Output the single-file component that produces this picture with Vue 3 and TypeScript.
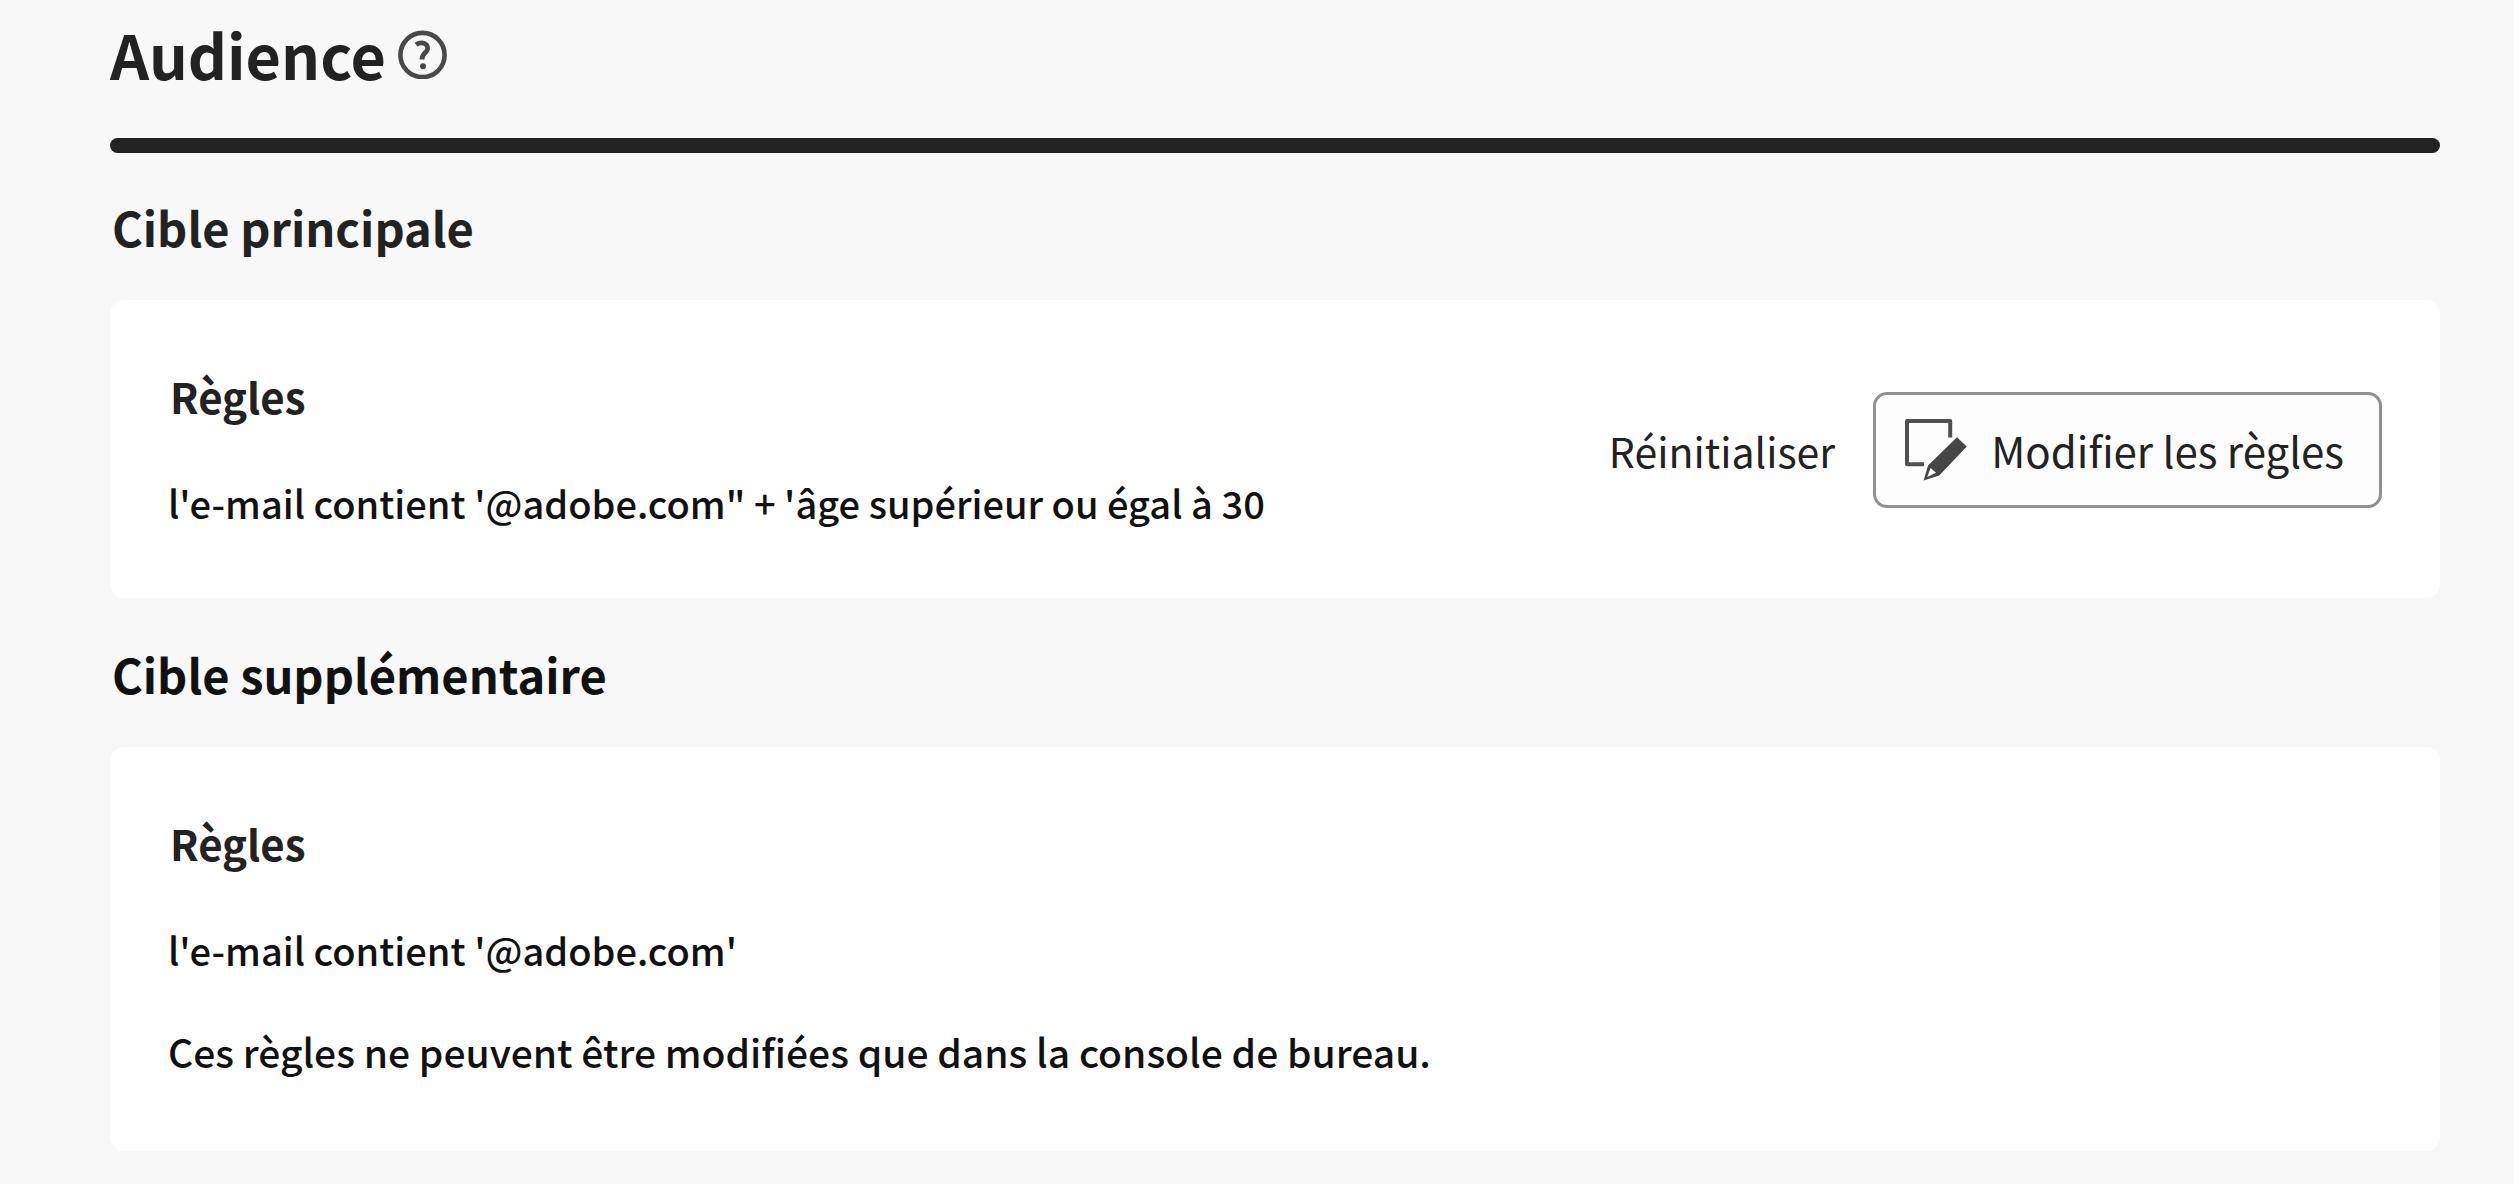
<script setup lang="ts">
interface Target {
  id: string
  title: string
  rule: string
  note?: string
  editable: boolean
}

const targets: Target[] = [
  {
    id: 'main',
    title: 'Cible principale',
    rule: `l'e-mail contient '@adobe.com" + 'âge supérieur ou égal à 30`,
    editable: true,
  },
  {
    id: 'extra',
    title: 'Cible supplémentaire',
    rule: `l'e-mail contient '@adobe.com'`,
    note: 'Ces règles ne peuvent être modifiées que dans la console de bureau.',
    editable: false,
  },
]
</script>

<template>
  <main class="page">
    <header class="header">
      <h1 class="title">Audience</h1>
      <button class="help" type="button" aria-label="Aide">
        <svg viewBox="0 0 49 49" width="49" height="49" fill="none" stroke="#494949" aria-hidden="true">
          <circle cx="24.5" cy="25" r="22.1" stroke-width="4.6" />
          <path d="M18 14.6C20.6 12.8 24 12.4 26.8 13.6C29.6 14.9 30.4 18 28.9 20.6C27.4 23.2 24 24.2 24 29.4" stroke-width="4.8" />
          <circle cx="25" cy="36.2" r="3" fill="#494949" stroke="none" />
        </svg>
      </button>
    </header>
    <hr class="bar" />

    <section v-for="t in targets" :key="t.id" class="target" :class="t.id" :aria-labelledby="t.id">
      <h2 :id="t.id" class="subtitle">{{ t.title }}</h2>
      <div class="card">
        <div class="rules">
          <h3 class="label">Règles</h3>
          <p class="rule">{{ t.rule }}</p>
          <p v-if="t.note" class="note">{{ t.note }}</p>
        </div>
        <div v-if="t.editable" class="actions">
          <button class="reset" type="button">Réinitialiser</button>
          <button class="edit" type="button">
            <svg viewBox="0 0 62 62" width="62" height="62" aria-hidden="true">
              <path d="M19 45.2H2V2H45.2V18.5" fill="none" stroke="#505050" stroke-width="4" stroke-linejoin="round" />
              <path
                d="M52 18.3L61.7 27.6L34.2 56.4L18.6 61.6L23 46.6ZM25.6 49L22.2 58L31 53.8Z"
                fill="#464646"
                fill-rule="evenodd"
              />
            </svg>
            <span>Modifier les règles</span>
          </button>
        </div>
      </div>
    </section>
  </main>
</template>

<style>
body {
  background: #f8f8f8;
}
</style>

<style scoped>
.page {
  padding: 18px 74px 33px 110px;
  color: #222;
  font-family: 'Noto Sans CJK SC', 'Noto Sans', sans-serif;
}

h1,
h2,
h3,
p {
  margin: 0;
}

button {
  padding: 0;
  border: 0;
  background: none;
  color: inherit;
  font-family: inherit;
  cursor: pointer;
}

svg {
  display: block;
  flex: none;
}

.header {
  display: flex;
  align-items: center;
  gap: 12px;
}

.title {
  font-size: 61px;
  font-weight: 700;
  line-height: 72px;
}

.bar {
  height: 15px;
  margin: 48px 0 0;
  border: 0;
  border-radius: 8px;
  background: #222;
}

.target {
  padding-top: 44px;
}

.subtitle {
  padding-left: 2px;
  margin-bottom: 43px;
  font-size: 47px;
  font-weight: 700;
  line-height: 60px;
}

.extra .subtitle {
  color: #111;
}

.extra {
  padding-top: 46px;
}

.card {
  display: flex;
  align-items: center;
  justify-content: space-between;
  gap: 38px;
  padding: 68px 58px 67px;
  border-radius: 14px;
  background: #fff;
}

.label {
  padding-left: 2px;
  font-size: 42px;
  font-weight: 700;
  line-height: 56px;
}

.rule,
.note {
  color: #111;
  font-weight: 500;
  line-height: 56px;
}

.rule {
  margin-top: 51px;
  font-size: 38px;
}

.note {
  margin: 45px 0 5px;
  font-size: 39px;
}

.actions {
  display: flex;
  flex: none;
  align-items: center;
  gap: 38px;
}

.reset {
  font-size: 41px;
  line-height: 56px;
}

.edit {
  display: flex;
  align-items: center;
  gap: 24px;
  padding: 24px 35px 24px 29px;
  border: 3px solid #919191;
  border-radius: 14px;
  background: #fdfdfd;
  font-size: 42px;
  line-height: 56px;
}
</style>
